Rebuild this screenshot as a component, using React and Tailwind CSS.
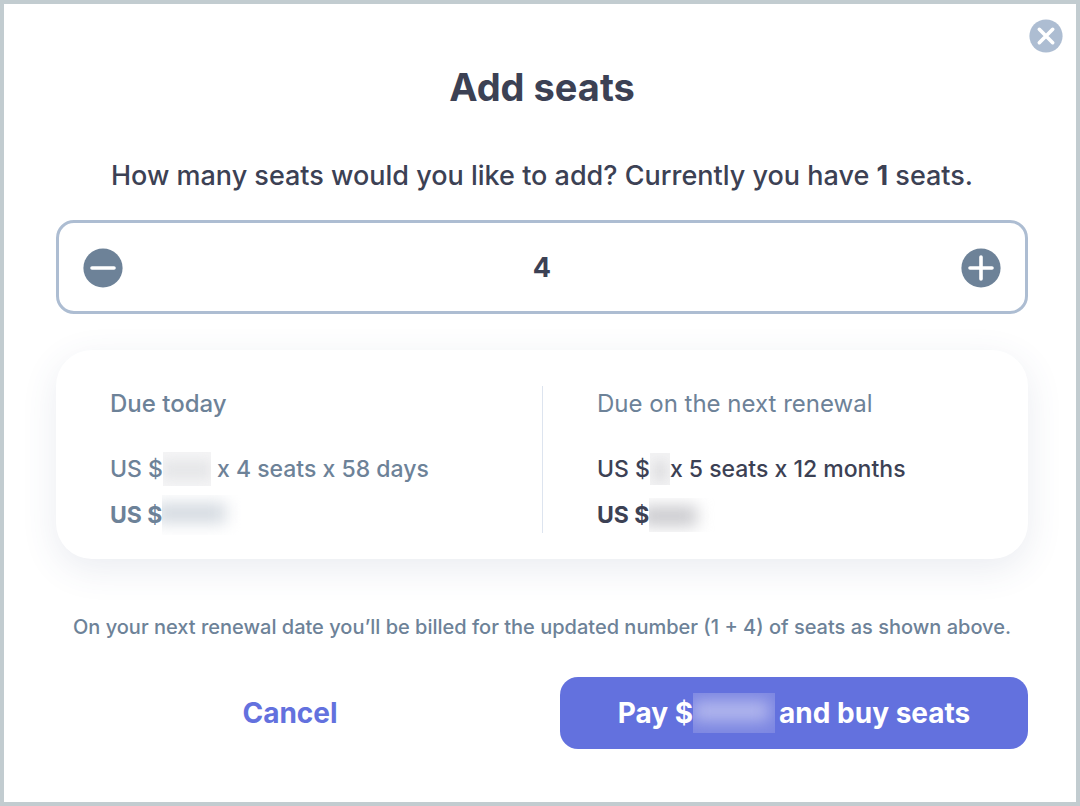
import { useState } from 'react';

function HiddenAmount({ boxCls, smudgeCls }) {
  return (
    <span aria-hidden="true" className={`inline-block shrink-0 overflow-hidden ${boxCls}`}>
      <span className={`block ${smudgeCls}`} />
    </span>
  );
}

function IconMinus() {
  return (
    <svg width="40" height="40" viewBox="0 0 40 40" fill="none">
      <circle cx="20" cy="20" r="19.6" fill="#6d8298" />
      <path d="M9 20h22" stroke="#fff" strokeWidth="3.6" strokeLinecap="round" />
    </svg>
  );
}

function IconPlus() {
  return (
    <svg width="40" height="40" viewBox="0 0 40 40" fill="none">
      <circle cx="20" cy="20" r="19.6" fill="#6d8298" />
      <path d="M9 20h22M20 9v22" stroke="#fff" strokeWidth="3.6" strokeLinecap="round" />
    </svg>
  );
}

function IconClose() {
  return (
    <svg width="34" height="34" viewBox="0 0 34 34" fill="none">
      <circle cx="17" cy="17" r="16.6" fill="#adbdd2" />
      <path d="M10.3 10.3l13.4 13.4M23.7 10.3l-13.4 13.4" stroke="#fff" strokeWidth="3.6" strokeLinecap="round" />
    </svg>
  );
}

export default function App() {
  const current = 1;
  const [seats, setSeats] = useState(4);

  function onType(e) {
    const n = Number(e.target.value.replace(/\D/g, ''));
    setSeats(n);
  }

  return (
    <main className="relative min-h-screen border-4 border-[#c2ccd0] bg-white pl-[52px] pr-12 pt-14 pb-12 font-['Inter','Liberation_Sans',sans-serif] font-medium text-[#3c4154]">
      <button type="button" aria-label="Close" className="absolute right-[13px] top-[15px] cursor-pointer">
        <IconClose />
      </button>

      <h1 className="text-center text-[38px] leading-[54px] font-bold">Add seats</h1>

      <form onSubmit={(e) => e.preventDefault()}>
        <label htmlFor="seats" className="mt-11 block text-center text-[27px] leading-9">
          How many seats would you like to add? Currently you have <b>{current}</b> seats.
        </label>

        <div className="mt-[26px] flex h-[94px] items-center justify-between rounded-[18px] border-3 border-[#adbdd2] px-6 pt-0.5">
          <button type="button" aria-label="Remove a seat" onClick={() => setSeats(Math.max(1, seats - 1))} className="shrink-0 cursor-pointer">
            <IconMinus />
          </button>
          <input
            id="seats" type="text" inputMode="numeric"
            value={seats} onChange={onType}
            className="min-w-0 flex-1 bg-transparent text-center text-[27px] leading-9 font-bold focus:outline-none"
          />
          <button type="button" aria-label="Add a seat" onClick={() => setSeats(seats + 1)} className="shrink-0 cursor-pointer">
            <IconPlus />
          </button>
        </div>

        <div className="mt-9 grid grid-cols-2 rounded-[36px] bg-white pt-9 pb-[26px] text-[23px] shadow-[0_10px_36px_rgba(60,80,130,0.11)]">
          <section className="h-[147px] pl-[54px] text-[#6d8298]">
            <h2 className="text-[24px] leading-9">Due today</h2>
            <p className="mt-[26px] flex h-[42px] items-center whitespace-pre">
              US $<HiddenAmount boxCls="h-[34px] w-12 bg-[#f5f5f6]" smudgeCls="mt-2 h-5 w-12 bg-[#e6e7e9] blur-[6px]" /> x {seats} seats x 58 days
            </p>
            <p className="flex h-[50px] items-center font-bold">
              US $<HiddenAmount boxCls="h-10 w-20" smudgeCls="mt-2 -ml-2 h-5 w-[72px] bg-[#d3d9e0] blur-[8px]" />
            </p>
          </section>
          <section className="h-[147px] border-l border-[#dde4ef] pl-[54px]">
            <h2 className="text-[24px] leading-9 font-normal text-[#6d8298]">Due on the next renewal</h2>
            <p className="mt-[26px] flex h-[42px] items-center whitespace-pre">
              US $<HiddenAmount boxCls="h-8 w-5 bg-[#f3f3f4]" smudgeCls="mt-2 ml-1 h-5 w-3 bg-[#dcdcdf] blur-[6px]" />x {current + seats} seats x 12 months
            </p>
            <p className="flex h-[50px] items-center font-bold">
              US $<HiddenAmount boxCls="h-[34px] w-[72px]" smudgeCls="mt-2 -ml-2 h-5 w-14 bg-[#c9c9cd] blur-[8px]" />
            </p>
          </section>
        </div>

        <p className="mt-[54px] text-center text-[20px] leading-7 text-[#6d8298]">
          On your next renewal date you’ll be billed for the updated number ({current} + {seats}) of seats as shown above.
        </p>

        <div className="mt-9 grid grid-cols-2 gap-9 text-[28px] font-bold">
          <button type="button" className="h-[72px] cursor-pointer text-[#6371de]">Cancel</button>
          <button type="submit" className="flex h-[72px] cursor-pointer items-center justify-center whitespace-pre rounded-[18px] bg-[#6371de] text-white">
            Pay $<HiddenAmount boxCls="mr-1 h-10 w-[82px] bg-[#7c86e2]" smudgeCls="mt-2 h-5 w-[76px] bg-[#b4b9ee] blur-[8px]" />and buy seats
          </button>
        </div>
      </form>
    </main>
  );
}
